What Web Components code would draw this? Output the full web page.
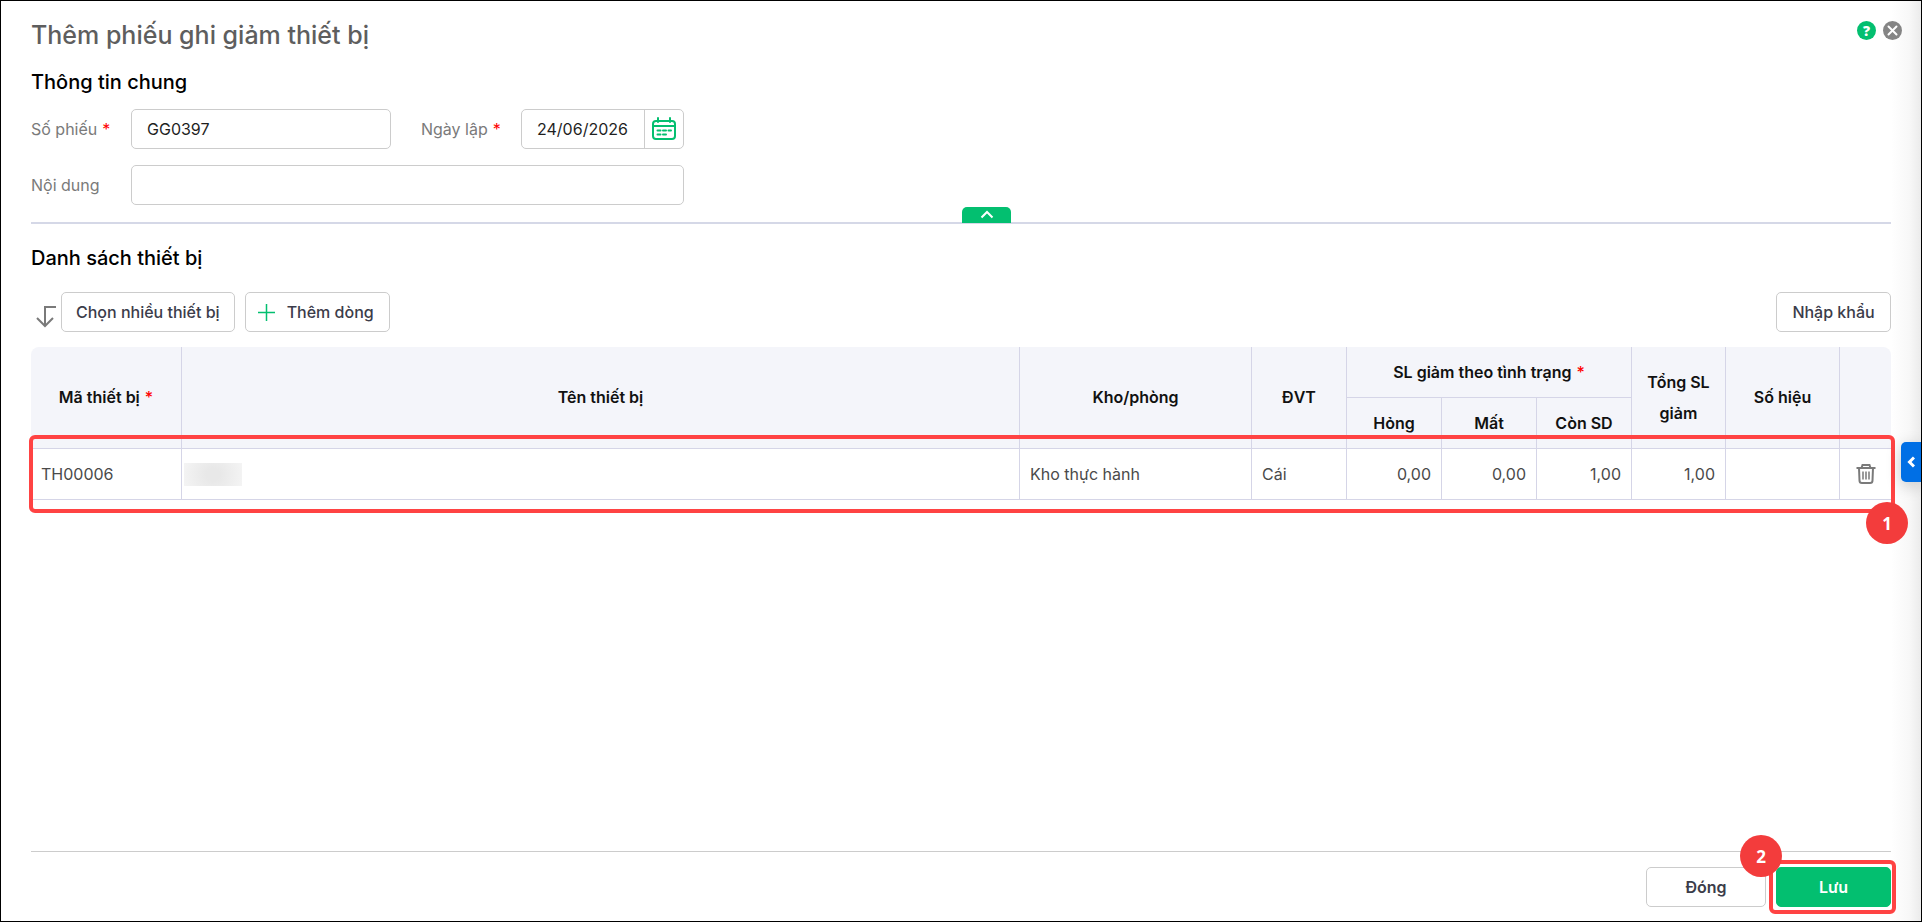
<!DOCTYPE html>
<html lang="vi">
<head>
<meta charset="utf-8">
<title>Thêm phiếu ghi giảm thiết bị</title>
<style>
body {
    margin: 0;
    font-family: Inter, "Noto Sans", sans-serif;
    font-size: 16px;
    color: #1f1f1f;
}
</style>
</head>
<body>
<decrease-page></decrease-page>

<script>
// helper: every element below gets an open shadow root from its markup
function define(name, html, setup) {
    const template = document.createElement('template');
    template.innerHTML = html;
    customElements.define(name, class extends HTMLElement {
        constructor() {
            super();
            this.attachShadow({mode: 'open'});
            this.shadowRoot.appendChild(template.content.cloneNode(true));
        }
        connectedCallback() {
            if (setup) setup(this, this.shadowRoot);
        }
    });
}

define('ui-button', `
<style>
:host {
    display: block;
}
button {
    display: flex;
    align-items: center;
    justify-content: center;
    gap: 12px;
    width: 100%;
    height: 40px;
    padding: 0 14px;
    border: 1px solid #ccc;
    border-radius: 5px;
    background: white;
    color: #3b3c4a;
    font: 500 16px Inter, "Noto Sans", sans-serif;
    white-space: nowrap;
    cursor: pointer;
}
:host([primary]) button {
    background: #03bf70;
    border-color: #03bf70;
    color: white;
}
:host([footer]) button {
    font-weight: 600;
}
:host([with-icon]) button {
    padding: 0 15px 0 12px;
}
</style>
<button type="button"><slot name="icon"></slot><slot></slot></button>
`);

define('step-badge', `
<style>
:host {
    display: flex;
    align-items: center;
    justify-content: center;
    width: 42px;
    height: 42px;
    border-radius: 50%;
    background: #f33c3c;
    color: white;
    font: 700 17px "Open Sans", sans-serif;
}
</style>
<slot></slot>
`);

define('text-field', `
<style>
:host {
    display: flex;
    align-items: center;
}
label {
    flex: 0 0 100px;
    color: #7a7a7a;
}
i {
    color: red;
    font-style: normal;
    margin-left: 5px;
}
.box {
    display: flex;
    flex: 1;
    min-width: 0;
    box-sizing: border-box;
    height: 40px;
    border: 1px solid #ccc;
    border-radius: 5px;
}
input {
    flex: 1;
    min-width: 0;
    padding: 0 15px;
    border: 0;
    outline: 0;
    background: none;
    color: #1f1f1f;
    font: inherit;
}
.pick {
    display: flex;
    align-items: center;
    justify-content: center;
    width: 39px;
    padding: 0;
    border: 0;
    border-left: 1px solid #ccc;
    background: none;
}
[hidden] {
    display: none;
}
</style>
<label for="input"><span></span><i hidden>*</i></label>
<div class="box">
    <input id="input" type="text">
    <button class="pick" type="button" aria-label="Chọn ngày" hidden>
        <svg width="24" height="24" viewBox="0 0 24 24" fill="none" stroke="#03bf70" stroke-width="2" stroke-linecap="round">
            <rect x="1" y="4" width="22" height="18" rx="3"/>
            <path d="M1 9h22M6 1v4M18 1v4"/>
            <path d="M5.5 13.5h3M11 13.5h3M16.500 13.5h2.500M5.500 17.500h3M11 17.500h3"/>
        </svg>
    </button>
</div>
`, (el, root) => {
    root.querySelector('span').textContent = el.getAttribute('label');
    root.querySelector('input').value = el.getAttribute('value') || '';
    root.querySelector('i').hidden = !el.hasAttribute('required');
    root.querySelector('.pick').hidden = !el.hasAttribute('date');
});

define('page-header', `
<style>
:host {
    display: flex;
    justify-content: space-between;
    padding: 16px 19px 0 30px;
}
h1 {
    margin: 0;
    color: #5e5e5e;
    font-size: 25px;
    font-weight: 500;
    line-height: 36px;
}
nav {
    display: flex;
    gap: 7px;
    padding-top: 4px;
}
button {
    width: 19px;
    height: 19px;
    padding: 0;
    border: 0;
    border-radius: 50%;
    background: #03bf70;
    color: white;
    font: 800 14px/19px "Open Sans", sans-serif;
}
.close {
    background: #858585;
}
svg {
    display: block;
}
</style>
<h1><slot></slot></h1>
<nav>
    <button type="button">?</button>
    <button class="close" type="button" aria-label="Đóng">
        <svg width="19" height="19" viewBox="0 0 19 19" stroke="white" stroke-width="2" stroke-linecap="round"><path d="M5.500 5.500l8 8M13.500 5.500l-8 8"/></svg>
    </button>
</nav>
`);

define('section-title', `
<style>
:host {
    display: block;
}
h2 {
    margin: 0;
    color: black;
    font-size: 20px;
    font-weight: 500;
    line-height: 24px;
}
</style>
<h2><slot></slot></h2>
`);

define('general-info', `
<style>
:host {
    display: block;
    position: relative;
    margin: 17px 30px 0;
    padding-bottom: 17px;
    border-bottom: 2px solid #d5d8e7;
}
.form {
    display: grid;
    grid-template-columns: 360px 263px;
    gap: 16px 30px;
    margin-top: 15px;
}
.wide {
    grid-column: 1 / 3;
}
/* handle that sits on the divider */
.toggle {
    position: absolute;
    left: calc(50% + 1px);
    bottom: -1px;
    width: 49px;
    height: 16px;
    padding: 0;
    border: 0;
    border-radius: 5px 5px 0 0;
    background: #03bf70;
}
.toggle svg {
    display: block;
    margin: 0 auto;
}
</style>
<section-title>Thông tin chung</section-title>
<div class="form">
    <text-field label="Số phiếu" value="GG0397" required></text-field>
    <text-field label="Ngày lập" value="24/06/2026" required date></text-field>
    <text-field class="wide" label="Nội dung"></text-field>
</div>
<button class="toggle" type="button" aria-label="Thu gọn">
    <svg width="14" height="10" viewBox="0 0 14 10" fill="none" stroke="white" stroke-width="2"><path d="M1.500 7.500L7 2l5.500 5.500"/></svg>
</button>
`);

define('device-table', `
<style>
:host {
    display: block;
    position: relative;
}
table {
    width: 100%;
    table-layout: fixed;
    border-spacing: 0;
}
th, td {
    box-sizing: border-box;
    height: 51px;
    padding: 0 10px;
    border-right: 1px solid #d5d5e7;
    border-bottom: 1px solid #d5d5e7;
}
th {
    background: #f4f5fa;
    color: #111;
    font-weight: 600;
    line-height: 31px;
}
td {
    color: #4a4a4a;
    text-align: left;
}
th i {
    margin-left: 1px;
    color: red;
    font-style: normal;
    font-weight: 500;
}
thead tr:first-child th:first-child {
    border-top-left-radius: 8px;
}
thead tr:first-child th:last-child {
    border-top-right-radius: 8px;
}
th.last, td:last-child {
    border-right: 0;
}
.num {
    text-align: right;
}
.masked {
    padding: 0 2px;
}
.masked div {
    width: 58px;
    height: 23px;
    background: radial-gradient(ellipse 60% 140% at 50% 50%, #e8e8e8 20%, #f6f6f6);
}
.remove {
    display: block;
    margin: 0 auto;
    padding: 0;
    border: 0;
    background: none;
}
.remove svg {
    display: block;
}
/* highlight round the data row */
.frame {
    position: absolute;
    right: -4px;
    bottom: -13px;
    left: -2px;
    box-sizing: border-box;
    height: 78px;
    border: 4px solid #ff4343;
    border-radius: 6px;
    pointer-events: none;
}
step-badge {
    position: absolute;
    right: -17px;
    bottom: -44px;
}
</style>
<table>
    <colgroup>
        <col style="width: 151px"><col><col style="width: 232px"><col style="width: 95px">
        <col style="width: 95px"><col style="width: 95px"><col style="width: 95px">
        <col style="width: 94px"><col style="width: 114px"><col style="width: 51px">
    </colgroup>
    <thead>
        <tr>
            <th rowspan="2">Mã thiết bị <i>*</i></th>
            <th rowspan="2">Tên thiết bị</th>
            <th rowspan="2">Kho/phòng</th>
            <th rowspan="2">ĐVT</th>
            <th colspan="3">SL giảm theo tình trạng <i>*</i></th>
            <th rowspan="2">Tổng SL giảm</th>
            <th rowspan="2">Số hiệu</th>
            <th rowspan="2" class="last"></th>
        </tr>
        <tr>
            <th>Hỏng</th>
            <th>Mất</th>
            <th>Còn SD</th>
        </tr>
    </thead>
    <tbody>
        <tr>
            <td>TH00006</td>
            <td class="masked"><div></div></td>
            <td>Kho thực hành</td>
            <td>Cái</td>
            <td class="num">0,00</td>
            <td class="num">0,00</td>
            <td class="num">1,00</td>
            <td class="num">1,00</td>
            <td></td>
            <td>
                <button class="remove" type="button" aria-label="Xóa">
                    <svg width="20" height="20" viewBox="0 0 20 20" fill="none" stroke="#7a7a7a" stroke-width="2">
                        <path d="M.5 4h19M5.500 4l1-3h7l1 3M3 4l.5 12.500a2.500 2.500 0 0 0 2.500 2.500h8a2.500 2.500 0 0 0 2.500-2.500L17 4"/>
                        <path stroke-width="1.500" d="M7 7.500v8M10 7.500v8M13 7.500v8"/>
                    </svg>
                </button>
            </td>
        </tr>
    </tbody>
</table>
<div class="frame"></div>
<step-badge>1</step-badge>
`);

define('device-list', `
<style>
:host {
    display: block;
    margin: 22px 30px 0;
}
.bar {
    display: flex;
    gap: 10px;
    margin: 22px 0 15px;
}
.pick {
    display: flex;
    align-items: flex-end;
    gap: 4px;
    padding-left: 5px;
}
.pick > svg {
    margin-bottom: 3px;
}
.import {
    min-width: 115px;
    margin-left: auto;
}
</style>
<section-title>Danh sách thiết bị</section-title>
<div class="bar">
    <div class="pick">
        <svg width="21" height="24" viewBox="0 0 21 24" fill="none" stroke="#7a7a7a" stroke-width="2"><path d="M20 2H9v19M1 13l8 8 8-8"/></svg>
        <ui-button>Chọn nhiều thiết bị</ui-button>
    </div>
    <ui-button with-icon>
        <svg slot="icon" width="17" height="17" viewBox="0 0 17 17" stroke="#03bf70" stroke-width="1.500"><path d="M8.500 0v17M0 8.500h17"/></svg>
        Thêm dòng
    </ui-button>
    <ui-button class="import">Nhập khẩu</ui-button>
</div>
<device-table></device-table>
`);

define('page-footer', `
<style>
:host {
    display: flex;
    justify-content: flex-end;
    gap: 10px;
    margin: auto 30px 14px;
    padding-top: 15px;
    border-top: 1px solid #ccc;
}
.cancel {
    width: 120px;
}
.save {
    position: relative;
    width: 115px;
}
.frame {
    position: absolute;
    inset: -7px -5px -7px -7px;
    border: 4px solid #ff4343;
    border-radius: 6px;
    pointer-events: none;
}
step-badge {
    position: absolute;
    left: -36px;
    top: -32px;
}
</style>
<ui-button class="cancel" footer>Đóng</ui-button>
<div class="save">
    <ui-button primary footer>Lưu</ui-button>
    <div class="frame"></div>
    <step-badge>2</step-badge>
</div>
`);

define('decrease-page', `
<style>
:host {
    display: flex;
    flex-direction: column;
    position: relative;
    box-sizing: border-box;
    min-height: 100vh;
    border: 1px solid black;
    background: linear-gradient(to left, #ebebeb, #f8f8f8 12px, white 30px);
}
/* drawer tab on the window's right edge */
.drawer {
    position: absolute;
    top: 441px;
    right: 0;
    width: 20px;
    height: 40px;
    padding: 0;
    border: 0;
    border-radius: 5px 0 0 5px;
    background: #006fe5;
    box-shadow: 0 4px 16px rgba(0, 0, 0, .2);
}
.drawer svg {
    display: block;
    margin: 0 auto;
}
</style>
<page-header>Thêm phiếu ghi giảm thiết bị</page-header>
<general-info></general-info>
<device-list></device-list>
<page-footer></page-footer>
<button class="drawer" type="button" aria-label="Mở">
    <svg width="8" height="12" viewBox="0 0 8 12" fill="none" stroke="white" stroke-width="3"><path d="M7 1.500L2.500 6 7 10.500"/></svg>
</button>
`);
</script>
</body>
</html>
